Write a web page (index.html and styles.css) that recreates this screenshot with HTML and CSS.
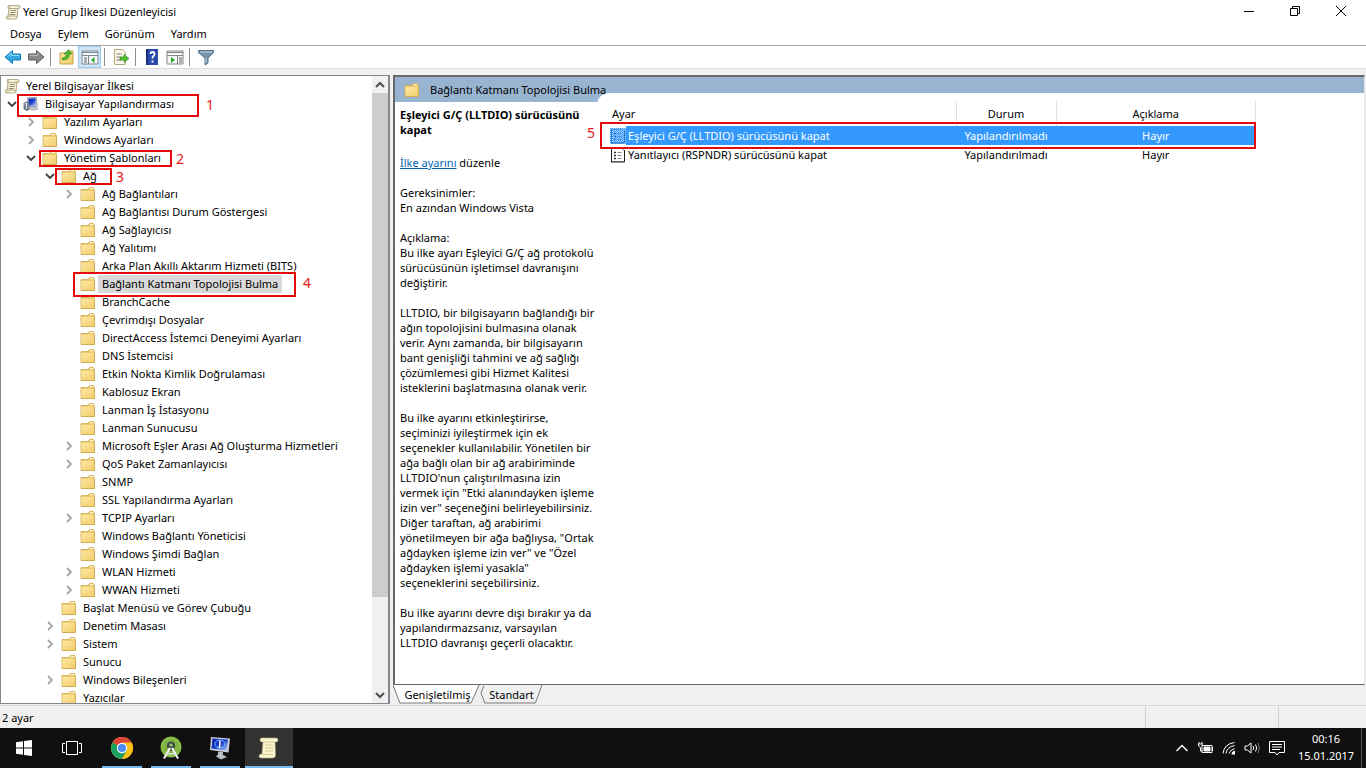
FILE: index.html
```html
<!DOCTYPE html>
<html lang="tr">
<head>
<meta charset="utf-8">
<title>Yerel Grup İlkesi Düzenleyicisi</title>
<link rel="stylesheet" href="styles.css">
</head>
<body>
<svg class="defs" aria-hidden="true">
  <defs>
    <linearGradient id="gold" x1="0" y1="0" x2="1" y2="1"><stop offset="0" stop-color="#ffe9a6"/><stop offset="1" stop-color="#f1cb68"/></linearGradient>
    <linearGradient id="paper" x1="0" y1="0" x2="1" y2="0"><stop offset="0" stop-color="#d9cfa4"/><stop offset=".5" stop-color="#fffbe6"/><stop offset="1" stop-color="#e3d9b0"/></linearGradient>
    <linearGradient id="screen" x1="0" y1="0" x2="1" y2="1"><stop offset="0" stop-color="#0a1a9c"/><stop offset=".5" stop-color="#1b3fd0"/><stop offset="1" stop-color="#b9d0f5"/></linearGradient>
    <symbol id="folder" viewBox="0 0 16 16"><path d="M1 3.500h7l1.500-2h4l.8 2v11H1z" fill="#eccb73" stroke="#cfa94e" stroke-width=".8"/><path d="M1.500 5h13v9.500h-13z" fill="url(#gold)"/><path d="M1 14.500h13.500V5" fill="none" stroke="#d2ab50"/><path d="M10 2.500h3" stroke="#fffbe6"/></symbol>
    <symbol id="scroll" viewBox="0 0 16 16"><path d="M4 1.500h9.500q1.500 0 1.500 1.500t-2 1.500l-1 8.500q0 2-1.500 2H2.500Q1 15 1 13.500T3 12L4 4Z" fill="url(#paper)" stroke="#a29977" stroke-width=".8"/><path d="M4 1.500Q2.500 2 3 3.500t2 1h8M3 12h8q1 0 1 1.500" fill="none" stroke="#a29977" stroke-width=".8"/><path d="M6 6.500h5M5.500 8.500h5M5 10.500h5" stroke="#918c74"/></symbol>
    <symbol id="computer" viewBox="0 0 18 16"><path d="M5 1l10-.5 1 10-9 .5z" fill="#d5dbe5" stroke="#8990a3"/><path d="M6 2l8-.5.7 8-7.700.5z" fill="url(#screen)"/><path d="M10 11h3l4 2.500-6 1.500-4-1z" fill="#c5c8cf" stroke="#848895" stroke-width=".6"/><path d="M1 7l4-2 2 2v7l-2 1.500L1 14z" fill="#7b8495" stroke="#505a70" stroke-width=".6"/><path d="M2 8l2-1v6" stroke="#eef1f8" fill="none"/></symbol>
    <symbol id="closed" viewBox="0 0 12 12"><path d="M4 2l4 4-4 4" fill="none" stroke="#a6a6a6" stroke-width="1.800"/></symbol>
    <symbol id="open" viewBox="0 0 12 12"><path d="M2 4l4 4 4-4" fill="none" stroke="#404040" stroke-width="1.800"/></symbol>
    <pattern id="dither" width="2" height="2" patternUnits="userSpaceOnUse"><path d="M0 0h2v2H0z" fill="#3399ff" fill-opacity=".45"/><path d="M0 0h1v1H0zM1 1h1v1H1z" fill="#3399ff"/></pattern>
    <symbol id="policy" viewBox="0 0 16 16"><path d="M1.500 1.500h10l3 3v10h-13z" fill="#fff" stroke="#999"/><path d="M14.500 3v12H1M1.500 1v14" fill="none" stroke="#222"/><path d="M4 5.500h2M4 8.500h2M4 11.500h2" stroke="#333" stroke-width="1.500"/><path d="M7.500 5.500h4M7.500 8.500h4M7.500 11.500h4" stroke="#888"/></symbol>
  </defs>
</svg>

<main class="window">
  <header class="titlebar">
    <svg class="i16"><use href="#scroll"/></svg>
    <h1>Yerel Grup İlkesi Düzenleyicisi</h1>
    <div class="caption">
      <button aria-label="Simge durumuna küçült"><svg viewBox="0 0 12 12"><path d="M1 6.500h10"/></svg></button>
      <button aria-label="Önceki boyut"><svg viewBox="0 0 12 12"><path d="M1.500 3.500h7v7h-7zM3.500 3.500v-2h7v7h-2"/></svg></button>
      <button aria-label="Kapat"><svg viewBox="0 0 12 12"><path d="M1 1l10 10M11 1L1 11"/></svg></button>
    </div>
  </header>
  <nav class="menubar">
    <button>Dosya</button><button>Eylem</button><button>Görünüm</button><button>Yardım</button>
  </nav>
  <div class="toolbar">
    <button aria-label="Geri"><svg class="i18" viewBox="0 0 18 18"><path d="M1 9l7.500-6.500V6H16.500v6h-8v3.500z" fill="#35a5e0" stroke="#1878b5"/><path d="M3.500 8.500l4-3.500v2.500h8" fill="none" stroke="#8fdcff"/></svg></button>
    <button aria-label="İleri"><svg class="i18" viewBox="0 0 18 18"><path d="M17 9L9.500 2.500V6h-8v6h8v3.500z" fill="#888" stroke="#5c5c5c"/><path d="M2.500 7.500h8V5" fill="none" stroke="#bbb"/></svg></button>
    <i class="sep"></i>
    <button aria-label="Bir düzey yukarı"><svg class="i18" viewBox="0 0 18 18"><path d="M2 5h6l2-2h5v13H2z" fill="url(#gold)" stroke="#c9a24a"/><path d="M4 10q4 0 4.500-4H6l4.500-4.500L14 6h-2.500q0 6-7 6z" fill="#4fb52e" stroke="#2f8a1c" stroke-width=".6"/></svg></button>
    <button class="on" aria-label="Konsol ağacını göster"><svg class="i18" viewBox="0 0 18 18"><path d="M1 3h16v13H1z" fill="#f4f6f8" stroke="#7b8793"/><path d="M1 4.500h16M1 7.500h16" stroke="#7b8793"/><path d="M7.500 8v8" stroke="#7b8793"/><path d="M3 10h3M3 12h3M3 14h3" stroke="#56697c"/><path d="M13.500 9v6L10 12z" fill="#2ea32e"/></svg></button>
    <i class="sep"></i>
    <button aria-label="Listeyi ver"><svg class="i18" viewBox="0 0 18 18"><path d="M2.500 1.500h8l3 3v12h-11z" fill="#fbf8e9" stroke="#b3a878"/><path d="M4.500 6h5M4.500 9h4M4.500 12h5" stroke="#777"/><path d="M8 9h4V6.500l5 4-5 4V12H8z" fill="#5ac034" stroke="#318f22" stroke-width=".7"/></svg></button>
    <i class="sep"></i>
    <button aria-label="Yardım"><svg class="i18" viewBox="0 0 18 18"><path d="M3 1h12v16H3z" fill="#2b49a8"/><path d="M3 1h2v16H3z" fill="#182f7e"/><path d="M7.500 6q0-2 2-2t2 2q0 1.200-1 2t-1 2.500M9.500 12.500v2" fill="none" stroke="#fff" stroke-width="1.800"/></svg></button>
    <button aria-label="Eylem bölmesini göster"><svg class="i18" viewBox="0 0 18 18"><path d="M1 3h16v13H1z" fill="#f7f7f7" stroke="#858585"/><path d="M1 4.500h16M1 7.500h16" stroke="#858585"/><path d="M11.500 8v8" stroke="#858585"/><path d="M13 10h3M13 12h3M13 14h3" stroke="#666"/><path d="M5 9v6l4-3z" fill="#2ea32e"/></svg></button>
    <i class="sep"></i>
    <button aria-label="Filtre"><svg class="i18" viewBox="0 0 18 18"><path d="M1.500 2.500h15v2L11 10v5l-3 2v-7L1.500 4.500z" fill="#7894aa" stroke="#536f87"/><path d="M3 4h12M9 10v5" stroke="#c6d8e6"/></svg></button>
  </div>

  <div class="work">
    <section class="tree-pane" aria-label="Konsol ağacı">
      <ul class="tree">
        <li class="l0"><svg class="i16"><use href="#scroll"/></svg><span>Yerel Bilgisayar İlkesi</span></li>
        <li class="l1"><svg class="tw"><use href="#open"/></svg><svg class="i16"><use href="#computer"/></svg><span>Bilgisayar Yapılandırması</span></li>
        <li class="l2"><svg class="tw"><use href="#closed"/></svg><svg class="i16"><use href="#folder"/></svg><span>Yazılım Ayarları</span></li>
        <li class="l2"><svg class="tw"><use href="#closed"/></svg><svg class="i16"><use href="#folder"/></svg><span>Windows Ayarları</span></li>
        <li class="l2"><svg class="tw"><use href="#open"/></svg><svg class="i16"><use href="#folder"/></svg><span>Yönetim Şablonları</span></li>
        <li class="l3"><svg class="tw"><use href="#open"/></svg><svg class="i16"><use href="#folder"/></svg><span>Ağ</span></li>
        <li class="l4"><svg class="tw"><use href="#closed"/></svg><svg class="i16"><use href="#folder"/></svg><span>Ağ Bağlantıları</span></li>
        <li class="l4"><i class="tw"></i><svg class="i16"><use href="#folder"/></svg><span>Ağ Bağlantısı Durum Göstergesi</span></li>
        <li class="l4"><i class="tw"></i><svg class="i16"><use href="#folder"/></svg><span>Ağ Sağlayıcısı</span></li>
        <li class="l4"><i class="tw"></i><svg class="i16"><use href="#folder"/></svg><span>Ağ Yalıtımı</span></li>
        <li class="l4"><i class="tw"></i><svg class="i16"><use href="#folder"/></svg><span>Arka Plan Akıllı Aktarım Hizmeti (BITS)</span></li>
        <li class="l4"><i class="tw"></i><svg class="i16"><use href="#folder"/></svg><span class="selected">Bağlantı Katmanı Topolojisi Bulma</span></li>
        <li class="l4"><i class="tw"></i><svg class="i16"><use href="#folder"/></svg><span>BranchCache</span></li>
        <li class="l4"><i class="tw"></i><svg class="i16"><use href="#folder"/></svg><span>Çevrimdışı Dosyalar</span></li>
        <li class="l4"><i class="tw"></i><svg class="i16"><use href="#folder"/></svg><span>DirectAccess İstemci Deneyimi Ayarları</span></li>
        <li class="l4"><i class="tw"></i><svg class="i16"><use href="#folder"/></svg><span>DNS İstemcisi</span></li>
        <li class="l4"><i class="tw"></i><svg class="i16"><use href="#folder"/></svg><span>Etkin Nokta Kimlik Doğrulaması</span></li>
        <li class="l4"><i class="tw"></i><svg class="i16"><use href="#folder"/></svg><span>Kablosuz Ekran</span></li>
        <li class="l4"><i class="tw"></i><svg class="i16"><use href="#folder"/></svg><span>Lanman İş İstasyonu</span></li>
        <li class="l4"><i class="tw"></i><svg class="i16"><use href="#folder"/></svg><span>Lanman Sunucusu</span></li>
        <li class="l4"><svg class="tw"><use href="#closed"/></svg><svg class="i16"><use href="#folder"/></svg><span>Microsoft Eşler Arası Ağ Oluşturma Hizmetleri</span></li>
        <li class="l4"><svg class="tw"><use href="#closed"/></svg><svg class="i16"><use href="#folder"/></svg><span>QoS Paket Zamanlayıcısı</span></li>
        <li class="l4"><i class="tw"></i><svg class="i16"><use href="#folder"/></svg><span>SNMP</span></li>
        <li class="l4"><i class="tw"></i><svg class="i16"><use href="#folder"/></svg><span>SSL Yapılandırma Ayarları</span></li>
        <li class="l4"><svg class="tw"><use href="#closed"/></svg><svg class="i16"><use href="#folder"/></svg><span>TCPIP Ayarları</span></li>
        <li class="l4"><i class="tw"></i><svg class="i16"><use href="#folder"/></svg><span>Windows Bağlantı Yöneticisi</span></li>
        <li class="l4"><i class="tw"></i><svg class="i16"><use href="#folder"/></svg><span>Windows Şimdi Bağlan</span></li>
        <li class="l4"><svg class="tw"><use href="#closed"/></svg><svg class="i16"><use href="#folder"/></svg><span>WLAN Hizmeti</span></li>
        <li class="l4"><svg class="tw"><use href="#closed"/></svg><svg class="i16"><use href="#folder"/></svg><span>WWAN Hizmeti</span></li>
        <li class="l3"><i class="tw"></i><svg class="i16"><use href="#folder"/></svg><span>Başlat Menüsü ve Görev Çubuğu</span></li>
        <li class="l3"><svg class="tw"><use href="#closed"/></svg><svg class="i16"><use href="#folder"/></svg><span>Denetim Masası</span></li>
        <li class="l3"><svg class="tw"><use href="#closed"/></svg><svg class="i16"><use href="#folder"/></svg><span>Sistem</span></li>
        <li class="l3"><i class="tw"></i><svg class="i16"><use href="#folder"/></svg><span>Sunucu</span></li>
        <li class="l3"><svg class="tw"><use href="#closed"/></svg><svg class="i16"><use href="#folder"/></svg><span>Windows Bileşenleri</span></li>
        <li class="l3"><i class="tw"></i><svg class="i16"><use href="#folder"/></svg><span>Yazıcılar</span></li>
      </ul>
      <div class="scrollbar">
        <button aria-label="Yukarı kaydır"><svg viewBox="0 0 12 12"><path d="M2 8l4-4 4 4"/></svg></button>
        <div class="track"><div class="thumb"></div></div>
        <button aria-label="Aşağı kaydır"><svg viewBox="0 0 12 12"><path d="M2 4l4 4 4-4"/></svg></button>
      </div>
    </section>

    <section class="detail">
      <div class="sheet">
        <div class="banner"><svg class="i16"><use href="#folder"/></svg><h2>Bağlantı Katmanı Topolojisi Bulma</h2></div>
        <div class="columns">
          <article class="info">
            <h3>Eşleyici G/Ç (LLTDIO) sürücüsünü<br>kapat</h3>
            <p><a href="#duzenle">İlke ayarını</a> düzenle</p>
            <p>Gereksinimler:<br>En azından Windows Vista</p>
            <p>Açıklama:<br>Bu ilke ayarı Eşleyici G/Ç ağ protokolü<br>sürücüsünün işletimsel davranışını<br>değiştirir.</p>
            <p>LLTDIO, bir bilgisayarın bağlandığı bir<br>ağın topolojisini bulmasına olanak<br>verir. Aynı zamanda, bir bilgisayarın<br>bant genişliği tahmini ve ağ sağlığı<br>çözümlemesi gibi Hizmet Kalitesi<br>isteklerini başlatmasına olanak verir.</p>
            <p>Bu ilke ayarını etkinleştirirse,<br>seçiminizi iyileştirmek için ek<br>seçenekler kullanılabilir. Yönetilen bir<br>ağa bağlı olan bir ağ arabiriminde<br>LLTDIO'nun çalıştırılmasına izin<br>vermek için "Etki alanındayken işleme<br>izin ver" seçeneğini belirleyebilirsiniz.<br>Diğer taraftan, ağ arabirimi<br>yönetilmeyen bir ağa bağlıysa, "Ortak<br>ağdayken işleme izin ver" ve "Özel<br>ağdayken işlemi yasakla"<br>seçeneklerini seçebilirsiniz.</p>
            <p>Bu ilke ayarını devre dışı bırakır ya da<br>yapılandırmazsanız, varsayılan<br>LLTDIO davranışı geçerli olacaktır.</p>
          </article>
          <div class="list">
            <table>
              <colgroup><col class="c-name"><col class="c-state"><col class="c-note"></colgroup>
              <thead><tr><th>Ayar</th><th>Durum</th><th>Açıklama</th></tr></thead>
              <tbody>
                <tr class="active"><td><div class="cell"><svg class="i16" viewBox="0 0 16 16"><use href="#policy" width="16" height="16"/><path d="M0 0h16v16H0z" fill="url(#dither)"/></svg><span>Eşleyici G/Ç (LLTDIO) sürücüsünü kapat</span></div></td><td>Yapılandırılmadı</td><td>Hayır</td></tr>
                <tr><td><div class="cell"><svg class="i16"><use href="#policy"/></svg><span>Yanıtlayıcı (RSPNDR) sürücüsünü kapat</span></div></td><td>Yapılandırılmadı</td><td>Hayır</td></tr>
              </tbody>
            </table>
          </div>
        </div>
      </div>
      <div class="tabs">
        <button class="tab current"><svg viewBox="0 0 88 19" preserveAspectRatio="none"><path d="M0 0l7 18h72l8-18" fill="#fff" stroke="#777"/></svg><span>Genişletilmiş</span></button>
        <button class="tab"><svg viewBox="0 0 66 19" preserveAspectRatio="none"><path d="M4 1L1 8l4 10h53l7-18" fill="#f0f0f0" stroke="#777"/></svg><span>Standart</span></button>
      </div>
    </section>
  </div>

  <footer class="status"><span>2 ayar</span><i></i><i></i></footer>

  <div class="mark m1"><b>1</b></div>
  <div class="mark m2"><b>2</b></div>
  <div class="mark m3"><b>3</b></div>
  <div class="mark m4"><b>4</b></div>
  <div class="mark m5"><b>5</b></div>
</main>

<nav class="taskbar" aria-label="Görev çubuğu">
  <button aria-label="Başlat"><svg width="16" height="16" viewBox="0 0 16 16"><path d="M0 2.200l7-1v6.300H0zM8 1l8-1v7.500H8zM0 8.500h7v6.300l-7-1zM8 8.500h8V16l-8-1z" fill="#fff"/></svg></button>
  <button aria-label="Görev görünümü"><svg width="20" height="16" viewBox="0 0 20 16"><path d="M4.500 1.500h11v13h-11zM3 3.500H.5v9H3M17 3.500h2.500v9H17" fill="none" stroke="#fff"/></svg></button>
  <button class="app first" aria-label="Chrome"><svg width="22" height="22" viewBox="0 0 22 22"><circle cx="11" cy="11" r="11" fill="#fbc116"/><path d="M11 11L1.500 5.500A11 11 0 0 1 20.500 5.500z" fill="#dc4437"/><path d="M11 0A11 11 0 0 1 20.500 5.500H11z" fill="#dc4437"/><path d="M1.500 5.500A11 11 0 0 0 11 22l5-8.500-5-2.500z" fill="#1aa15f"/><path d="M20.500 5.500A11 11 0 0 1 11 22l5-8 .5-5-5.500-3.500z" fill="#fbc116"/><circle cx="11" cy="11" r="5.200" fill="#fff"/><circle cx="11" cy="11" r="4" fill="#4a8af4"/></svg></button>
  <button class="app" aria-label="Android Studio"><svg width="22" height="24" viewBox="0 0 22 24"><circle cx="11" cy="11" r="10.500" fill="#88bd48"/><circle cx="11" cy="11" r="8" fill="#7fb344"/><path d="M7 9.500a4 4 0 0 1 8 0V12H7z" fill="#3c5140"/><circle cx="11" cy="9" r="1.500" fill="#a5c58a"/><path d="M11 12v3" stroke="#3c5140" stroke-width="3"/><path d="M10 12L4 22.500M12 12l6 10.500" stroke="#f4f4f4" stroke-width="2" fill="none"/><path d="M6.500 16.500q4.500 3 9 0" stroke="#e8e8e8" stroke-width="1.500" fill="none"/></svg></button>
  <button class="app" aria-label="Uzak masaüstü"><svg width="22" height="24" viewBox="0 0 22 24"><path d="M2 1l19 1.500-1.500 14L1 14z" fill="#cad0d8"/><path d="M3.500 2.500l15.500 1-1.300 11L2.500 12.500z" fill="url(#screen)"/><ellipse cx="11" cy="8" rx="5" ry="4" fill="none" stroke="#78b8ff"/><path d="M11 4.500l-.5 7.500" stroke="#fff" stroke-width="1.500"/><path d="M9 15.500l5 .5v3l4 2-6 2.500-5-3 2-2z" fill="#b8bec7"/></svg></button>
  <button class="app running" aria-label="Yerel Grup İlkesi Düzenleyicisi"><svg width="24" height="24" viewBox="0 0 24 24"><path d="M5 2h14q2 0 2 2t-3 2l.5 13q0 3-3 3H4q-2 0-2-2t3-2L6 6Q3 6 3 4t2-2z" fill="#fbf4cf" stroke="#b9ae80" stroke-width=".6"/><path d="M6 6h12M5 18.500h11M8 9h8M8 12h8M8 15h8" stroke="#d8ca91"/></svg></button>
  <div class="tray">
    <button aria-label="Gizli simgeler"><svg width="14" height="14" viewBox="0 0 14 14"><path d="M1.500 10L7 4.500l5.500 5.500" stroke-width="1.400"/></svg></button>
    <button aria-label="Pil"><svg width="17" height="14" viewBox="0 0 17 14"><path d="M5 4.500h10v7H5zM15.500 6v4M1 3h5M2 1v2M5 1v2M1.500 3v2l2 1.500V10h2"/><path d="M7 6h6v4H7z" fill="#fff"/></svg></button>
    <button aria-label="Ağ"><svg width="14" height="14" viewBox="0 0 14 14"><path d="M1 12.500Q2 3 12.500 1.500M4 12.500Q5 6 12.500 4.500M7 12.500Q8 9 12.500 7.500" /><path d="M9.500 13.500q0-3 3.500-4v4z" fill="#fff" stroke="none"/></svg></button>
    <button aria-label="Ses"><svg width="17" height="14" viewBox="0 0 17 14"><path d="M1 5h2.500L7 2v10L3.500 9H1zM9 5q1.500 2 0 4M11.500 3.500q2.500 3.500 0 7"/><path d="M14 2q3 5 0 10" stroke="#777"/></svg></button>
    <button aria-label="Bildirimler"><svg width="16" height="16" viewBox="0 0 16 16"><path d="M.5 1.500h15v11H10L8 15l-2-2.500H.5zM3 4.500h10M3 7h10M3 9.500h8"/></svg></button>
    <time datetime="2017-01-15T00:16">00:16<br>15.01.2017</time>
    <i></i>
  </div>
</nav>
</body>
</html>
```
FILE: styles.css
```css
* { box-sizing: border-box; }
body {
  margin: 0;
  height: 100vh;
  display: flex;
  flex-direction: column;
  overflow: hidden;
  background: #fff;
  color: #000;
  font: 11px/18px "Noto Sans", "Open Sans", sans-serif;
}
button { font: inherit; color: inherit; background: none; border: 0; padding: 0; }
h1, h2, h3, p, ul { margin: 0; padding: 0; font: inherit; }
svg { display: block; flex: none; }
.defs { position: absolute; width: 0; height: 0; }
.i16 { width: 16px; height: 16px; flex: none; }
.i18 { width: 18px; height: 18px; }

.window { position: relative; flex: 1; min-height: 0; display: flex; flex-direction: column; background: #f0f0f0; }
.titlebar { height: 24px; display: flex; align-items: center; gap: 2px; padding-left: 5px; background: #fff; }
.caption { margin-left: auto; padding-right: 2px; display: flex; }
.caption button { width: 46px; height: 20px; padding-bottom: 2px; display: grid; place-items: center; }
.caption svg { width: 12px; height: 12px; fill: none; stroke: #000; }
.menubar { height: 22px; display: flex; gap: 16px; padding: 0 10px 2px; background: #fff; border-bottom: 1px solid #a9a9a9; }
.toolbar { height: 23px; display: flex; align-items: center; padding-left: 1px; background: #fff; border-bottom: 1px solid #dcdcdc; }
.toolbar button { width: 23px; height: 22px; display: grid; place-items: center; }
.toolbar .on { background: #cfe6f8; border: 1px solid #99c9ef; }
.sep { width: 1px; height: 18px; margin: 0 4px 0 3px; background: #8d8d8d; }

.work { flex: 1; min-height: 0; display: flex; gap: 3px; padding-top: 6px; }
.tree-pane { width: 390px; flex: none; display: flex; justify-content: space-between; background: #fff; border: 1px solid #828790; border-right-width: 2px; overflow: hidden; }
.tree { list-style: none; height: 0; padding-top: 1px; }
.tree li { height: 18px; display: flex; align-items: center; white-space: nowrap; }
.tree span { padding: 0 4px; margin-left: 2px; }
.tree .selected { background: #d9d9d9; }
.tw { width: 12px; height: 12px; margin-right: 5px; flex: none; }
.l0 { padding-left: 3px; }
.l1 { padding-left: 5px; }
.l2 { padding-left: 24px; }
.l3 { padding-left: 43px; }
.l4 { padding-left: 62px; }
.scrollbar { width: 16px; display: flex; flex-direction: column; background: #f0f0f0; }
.scrollbar button { height: 17px; display: grid; place-items: center; }
.scrollbar svg { width: 12px; height: 12px; fill: none; stroke: #505050; stroke-width: 2; }
.track { flex: 1; }
.thumb { height: 85%; background: #cdcdcd; }

.detail { flex: 1; min-width: 0; display: flex; flex-direction: column; }
.sheet { flex: 1; min-height: 0; display: flex; flex-direction: column; background: #fff; border: 2px solid #696969; border-width: 2px 1px 1px 2px; border-right-color: #e3e3e3; margin-right: 1px; }
.banner { height: 25px; flex: none; display: flex; align-items: center; gap: 10px; padding-left: 9px; background: #99b4d1; }
.banner h2 { position: relative; z-index: 1; }
.columns { flex: 1; min-height: 0; display: flex; }
.info { width: 202px; flex: none; padding: 5px 0 0 5px; line-height: 15px; white-space: nowrap; }
.info h3 { font-weight: 700; margin-bottom: 18px; }
.info p { margin-bottom: 15px; }
.info a { color: #0066b4; }
.list { flex: 1; min-width: 0; margin-top: -9px; padding: 8px 0 0 8px; background: #fff; border-top-left-radius: 12px; }
table { border-collapse: collapse; table-layout: fixed; width: 651px; }
.c-name { width: 351px; }
.c-state { width: 100px; }
th, td { font-weight: 400; padding: 0; height: 19px; text-align: center; white-space: nowrap; }
th { height: 25px; border-right: 1px solid #e2e2e2; }
th:first-child { text-align: left; padding-left: 7px; }
.cell { display: flex; align-items: center; gap: 2px; padding-left: 5px; }
.active { color: #fff; background: linear-gradient(90deg, #fff 21px, #3399ff 21px); }
.tabs { display: flex; height: 19px; }
.tab { position: relative; width: 87px; padding-left: 2px; }
.tab + .tab { width: 63px; padding-left: 0; }
.tab svg { position: absolute; inset: 0; width: 100%; height: 100%; }
.tab span { position: relative; }

.status { height: 23px; flex: none; display: flex; align-items: center; margin-top: 1px; border-top: 1px solid #d7d7d7; padding: 1px 0 0 2px; }
.status span { flex: 1; }
.status i { width: 133px; height: 100%; border-left: 1px solid #d0d0d0; }
.status i:last-child { width: 88px; }

.mark { position: absolute; border: 2px solid #e30b0b; pointer-events: none; }
.mark b { position: absolute; left: calc(100% + 9px); top: -1px; font-weight: 400; font-size: 14px; line-height: 20px; color: #e81a1a; }
.m1 { left: 17px; top: 94px; width: 182px; height: 23px; }
.m2 { left: 39px; top: 150px; width: 133px; height: 17px; }
.m3 { left: 55px; top: 168px; width: 57px; height: 17px; }
.m3 b, .m2 b { left: calc(100% + 6px); top: -3px; }
.m4 { left: 73px; top: 272px; width: 223px; height: 25px; }
.m5 { left: 600px; top: 122px; width: 656px; height: 27px; }
.m5 b { left: -15px; }

.taskbar { height: 40px; flex: none; display: flex; background: #101010; color: #fff; }
.taskbar > button { width: 48px; display: grid; place-items: center; }
.taskbar .app { margin-right: 1px; background: linear-gradient(#76b9ed, #76b9ed) center bottom / 40px 2px no-repeat; }
.taskbar .first { margin-left: 2px; }
.taskbar .running { background-color: #333; background-size: 100% 2px; }
.tray { margin-left: auto; display: flex; align-items: center; gap: 8px; }
.tray svg { fill: none; stroke: #fff; }
.tray time { width: 58px; margin: 0 -2px 0 4px; padding-bottom: 2px; text-align: center; line-height: 17px; }
.tray i { width: 5px; height: 100%; border-left: 1px solid #555; }
```
